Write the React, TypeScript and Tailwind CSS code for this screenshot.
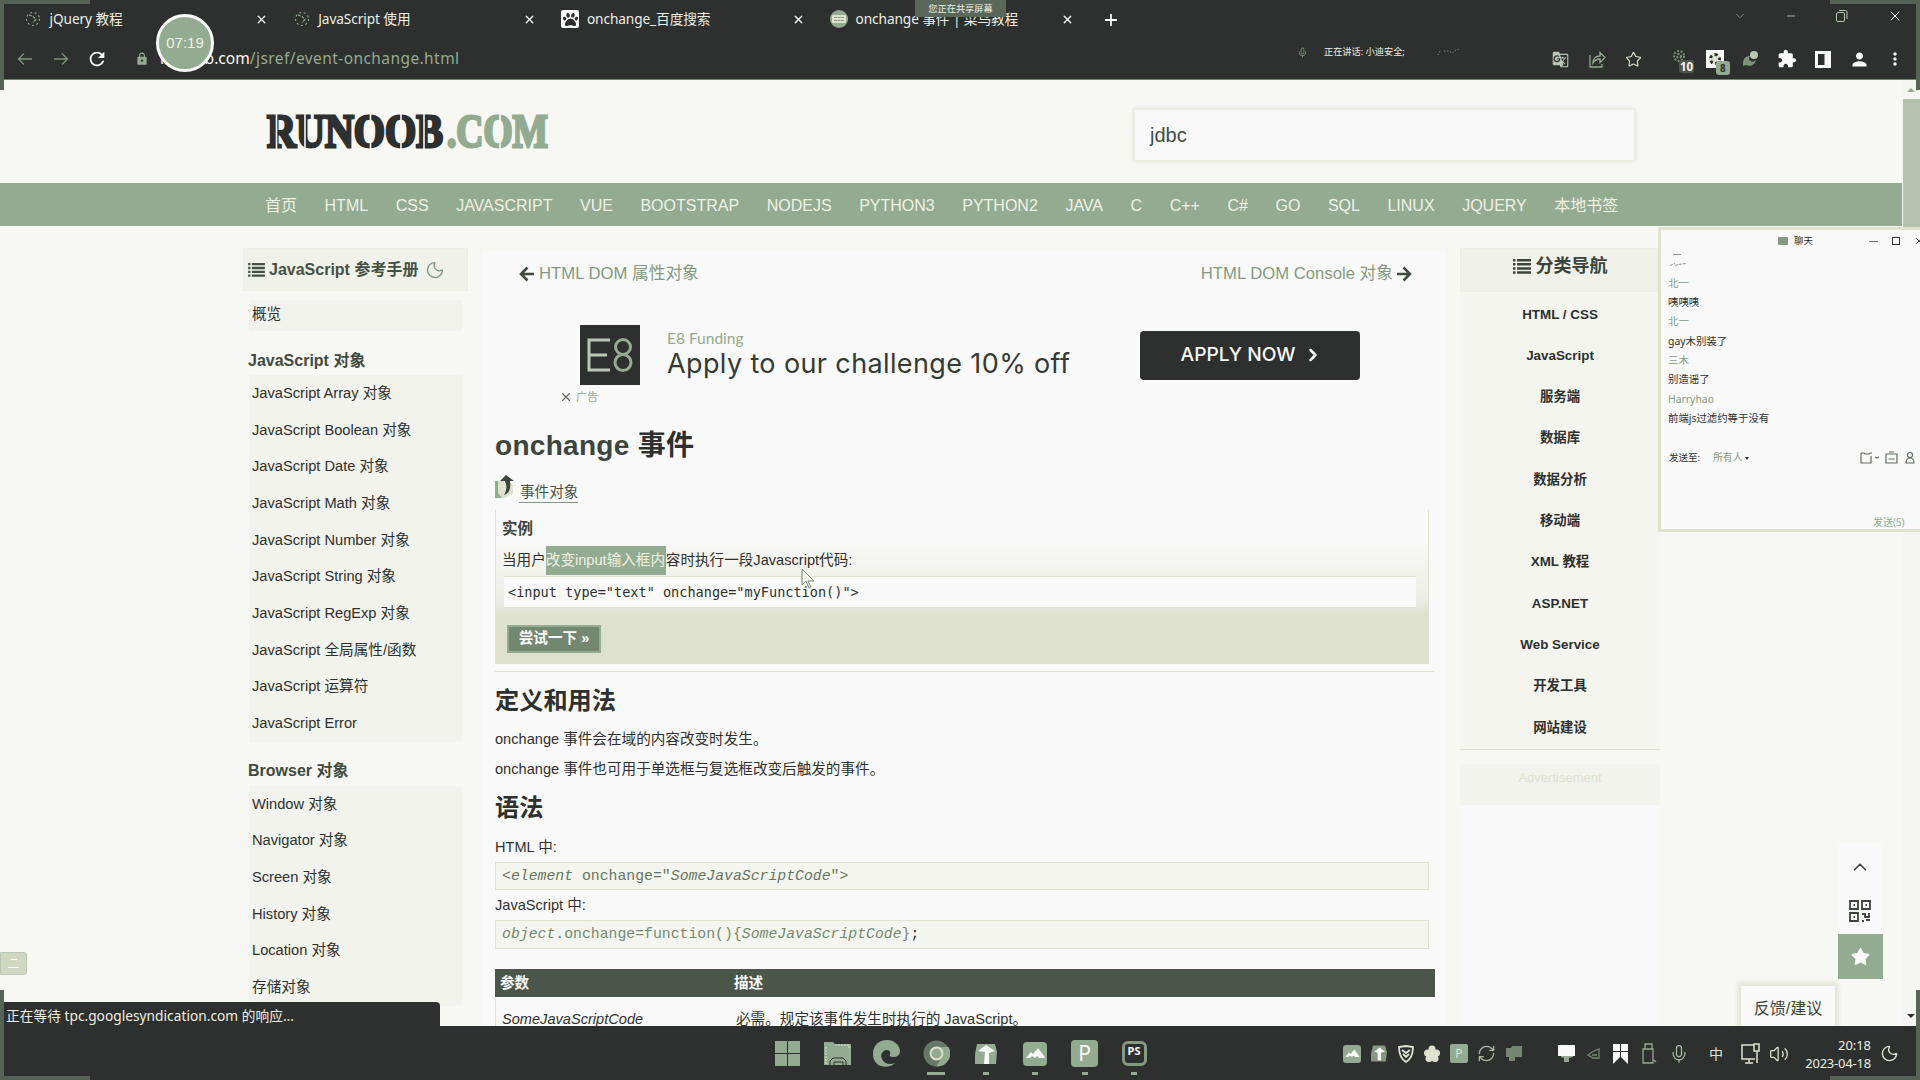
import type { ReactNode } from "react";
import { FaPaw, FaStar } from "react-icons/fa";
import { ChevronDown, ChevronRight, ChevronUp, Mic, Minus, Moon, Plus, Star, Volume2, X, RefreshCw } from "lucide-react";
import { MdLock, MdMoreVert, MdPerson, MdRefresh, MdExtension, MdGTranslate } from "react-icons/md";

const ARIAL = "font-['Liberation_Sans','Noto_Sans_CJK_SC',sans-serif]";
const SEGOE = "font-['Noto_Sans','Noto_Sans_CJK_SC',sans-serif]";

const tabs = [
  { title: "jQuery 教程", kind: "loading" },
  { title: "JavaScript 使用", kind: "loading" },
  { title: "onchange_百度搜索", kind: "baidu" },
  { title: "onchange 事件 | 菜鸟教程", kind: "runoob" },
];

const nav = [
  "首页", "HTML", "CSS", "JAVASCRIPT", "VUE", "BOOTSTRAP", "NODEJS", "PYTHON3", "PYTHON2",
  "JAVA", "C", "C++", "C#", "GO", "SQL", "LINUX", "JQUERY", "本地书签",
];

const jsItems = [
  "JavaScript Array 对象", "JavaScript Boolean 对象", "JavaScript Date 对象", "JavaScript Math 对象",
  "JavaScript Number 对象", "JavaScript String 对象", "JavaScript RegExp 对象",
  "JavaScript 全局属性/函数", "JavaScript 运算符", "JavaScript Error",
];
const browserItems = ["Window 对象", "Navigator 对象", "Screen 对象", "History 对象", "Location 对象", "存储对象"];
const categories = [
  "HTML / CSS", "JavaScript", "服务端", "数据库", "数据分析", "移动端",
  "XML 教程", "ASP.NET", "Web Service", "开发工具", "网站建设",
];
const chat = [
  { t: "北一", who: true }, { t: "咦咦咦", who: false }, { t: "北一", who: true }, { t: "gay木别装了", who: false },
  { t: "三木", who: true }, { t: "别造谣了", who: false }, { t: "Harryhao", who: true }, { t: "前端js过滤约等于没有", who: false },
];

function TabIcon({ kind }: { kind: string }) {
  if (kind === "loading")
    return (
      <svg width="18" height="18" viewBox="0 0 18 18" fill="none" stroke="#93ab90" strokeWidth="1.1">
        <circle cx="9" cy="9" r="6.5" strokeDasharray="2 2.5" />
        <path d="M5 5l4 1.5 3 3-3 3" strokeDasharray="3 1" />
      </svg>
    );
  if (kind === "baidu")
    return (
      <span className="flex h-[18px] w-[18px] items-center justify-center rounded-[2px] bg-[#f9f9f9]">
        <FaPaw size={15} color="#2e302f" />
      </span>
    );
  return (
    <span className="flex h-[18px] w-[18px] items-center justify-center rounded-full bg-[#93ab90]">
      <span className="flex h-[8px] w-[14px] flex-col justify-center gap-[2px] rounded-[1px] bg-[#dfe2cf] px-[2px]">
        <i className="border-t border-dashed border-[#84997f]" />
        <i className="border-t border-dashed border-[#84997f]" />
      </span>
    </span>
  );
}

function ListIcon({ size }: { size: number }) {
  return (
    <svg width={size} height={size - 3} viewBox="0 0 18 15" fill="currentColor">
      <path d="M0 0h2.500v2.500H0zM4 0h14v2.500H4zM0 4.100h2.500v2.500H0zM4 4.100h14v2.500H4zM0 8.200h2.500v2.500H0zM4 8.200h14v2.500H4zM0 12.300h2.500v2.500H0zM4 12.300h14v2.500H4z" />
    </svg>
  );
}

function ArrowIcon({ flip }: { flip?: boolean }) {
  return (
    <svg width="15" height="16" viewBox="0 0 15 16" fill="none" stroke="#414a41" strokeWidth="2.600" className={flip ? "rotate-180" : ""}>
      <path d="M15 8H3M8.500 1.500L2 8l6.500 6.500" />
    </svg>
  );
}

function Browser() {
  return (
    <div className={`h-20 shrink-0 border-b border-[#74856f] bg-[#2e302f] text-[#f9f9f9] ${SEGOE}`}>
      <div className="flex h-[39px] items-center">
        {tabs.map((t, i) => (
          <div key={i} className="flex w-[268.7px] items-center pl-[24px] pr-[1px]">
            <TabIcon kind={t.kind} />
            <span className="ml-[7.5px] flex-1 whitespace-nowrap text-[13.7px] tracking-[-0.1px] text-[#eceee3]">{t.title}</span>
            <X size={13} strokeWidth={2.5} />
          </div>
        ))}
        <Plus size={18} strokeWidth={2.4} className="ml-[27px]" />
        <div className="ml-auto mr-[17px] flex items-center gap-[38px] pb-[7px] text-[#b9c8b4]">
          <ChevronDown size={14} strokeWidth={1} />
          <Minus size={12} strokeWidth={1.8} />
          <svg width="14" height="14" viewBox="0 0 14 14" fill="none" stroke="currentColor">
            <rect x="1.5" y="3.5" width="8" height="9" rx="1.5" />
            <path d="M4 1.5h6.5a1.5 1.5 0 0 1 1.5 1.5v7" />
          </svg>
          <X size={16} strokeWidth={1.5} color="#f9f9f9" />
        </div>
      </div>
      <div className="flex h-[40px] items-center">
        <svg className="ml-[17px]" width="16" height="14" viewBox="0 0 16 14" fill="none" stroke="#7d927b" strokeWidth="1.3">
          <path d="M15 7H2M7 1.5L1.5 7 7 12.500" />
        </svg>
        <svg className="ml-[20px]" width="16" height="14" viewBox="0 0 16 14" fill="none" stroke="#7d927b" strokeWidth="1.3">
          <path d="M1 7h13M9 1.500L14.500 7 9 12.500" />
        </svg>
        <MdRefresh size={22} className="ml-[17px]" />
        <MdLock size={14} color="#93ab90" className="ml-[27px]" />
        <span className="ml-[11px] text-[15.6px]">runoob.com</span>
        <span className="text-[15.5px] tracking-[0.42px] text-[#93ab90]">/jsref/event-onchange.html</span>
        <div className="ml-auto mr-[17px] flex items-center">
          <MdGTranslate size={17} color="#b9c8b4" />
          <svg width="17" height="18" viewBox="0 0 17 18" fill="none" stroke="#93ab90" strokeWidth="1.300" className="ml-[20px]">
            <path d="M1 5v12h12v-3M4 13c0-5 3-7 7-7V2.500L16 7.500l-5 5V9c-3 0-5 1-7 4z" />
          </svg>
          <Star size={17} strokeWidth={1.6} color="#dfe2cf" className="ml-[19px]" />
          <span className="relative ml-[30px] h-[20px] w-[22px]">
            <svg width="16" height="16" viewBox="0 0 16 16" fill="none" stroke="#7d927b" strokeWidth="2" strokeDasharray="2 1.500">
              <circle cx="7" cy="7" r="5" />
              <circle cx="7" cy="7" r="2" />
            </svg>
            <span className="absolute left-[7px] top-[11px] rounded-[3px] bg-[#4c564c] px-[1px] text-[11.5px] font-bold leading-[13px]">10</span>
          </span>
          <span className="relative ml-[12px] flex h-[18px] w-[18px] items-center justify-center bg-[#f9f9f9]">
            <span className="h-[12px] w-[12px] rounded-full border-[3px] border-dotted border-[#2e302f] bg-[#dfe2cf]" />
            <span className="absolute left-[10px] top-[11px] rounded-[3px] bg-[#93ab90] px-[4px] text-[10px] font-bold leading-[14px] text-[#2e302f]">8</span>
          </span>
          <svg className="ml-[18px]" width="17" height="18" viewBox="0 0 17 18">
            <path d="M1 14C1 8 4 6 8 6c-2 3-1 5 3 6l3-2c-1 5-6 7-10 5l-3 1z" fill="#7d927b" />
            <circle cx="12" cy="5" r="4" fill="#b9c8b4" />
          </svg>
          <MdExtension size={20} className="ml-[18px]" />
          <svg className="ml-[18px]" width="16" height="17" viewBox="0 0 16 17">
            <path d="M0 0h16v17H0zM3 3v11h6.500V3z" fill="#f9f9f9" fillRule="evenodd" />
          </svg>
          <MdPerson size={21} className="ml-[18px]" />
          <MdMoreVert size={20} className="ml-[15px] mr-[-2px]" />
        </div>
      </div>
    </div>
  );
}

function Header() {
  return (
    <div className="flex h-[103px] shrink-0 items-start bg-[#f7f7f4]">
      <svg className="ml-[264px] mt-[22px]" width="290" height="60" viewBox="0 -10 290 60" fontFamily="'Liberation Serif', serif" fontWeight="bold">
        <text x="3" y="35" fontSize="46" textLength="176" lengthAdjust="spacingAndGlyphs" fill="#2e302f" stroke="#2e302f" strokeWidth="2.800">RUNOOB</text>
        <text x="183" y="35" fontSize="46" textLength="101" lengthAdjust="spacingAndGlyphs" fill="#93ab90" stroke="#93ab90" strokeWidth="2.800">.COM</text>
        <path d="M106.500 1v38M137 1v38M236 1v38M12.500 1v38M160 1v38M41 1v38" stroke="#f7f7f4" strokeWidth="1.600" />
      </svg>
      <div className={`ml-[579px] mt-[28px] flex h-[54px] w-[503px] items-center border-2 border-[#eceee2] bg-[#f9f9f9] pl-[15px] text-[20px] text-[#454c45] shadow-[0_0_3px_#e4e7d8] ${ARIAL}`}>
        jdbc
      </div>
    </div>
  );
}

function NavBar() {
  return (
    <div className={`flex h-[43px] w-[1902px] shrink-0 items-center gap-[27.55px] bg-[#93ab90] pl-[265px] pt-[3px] text-[16px] text-[#eff1e6] ${ARIAL}`}>
      {nav.map((n) => (
        <span key={n} className="whitespace-nowrap">{n}</span>
      ))}
    </div>
  );
}

function SideGroup({ title, items }: { title: string; items: string[] }) {
  return (
    <>
      <div className="flex h-[44px] shrink-0 items-center pl-[5px] pt-[15px] text-[16px] font-bold text-[#414a41]">{title}</div>
      <div className="ml-[6px] w-[213px] shrink-0 bg-[#f2f3ec]">
        {items.map((t) => (
          <div key={t} className="flex h-[36.7px] items-center whitespace-nowrap pl-[3px] pt-[1px] text-[14.65px]">{t}</div>
        ))}
      </div>
    </>
  );
}

function LeftColumn() {
  return (
    <div className="flex w-[225px] shrink-0 flex-col pt-[22px] text-[#2e302f]">
      <div className="flex h-[43px] shrink-0 items-center border border-[#eceee2] bg-[#f0f2e9] pl-[4px] pt-[1px] text-[16px] font-bold text-[#465146]">
        <ListIcon size={17} />
        <span className="ml-[4px] whitespace-nowrap">JavaScript 参考手册</span>
        <Moon size={20} strokeWidth={1.500} color="#7d927b" className="ml-[7px]" />
      </div>
      <div className="ml-[6px] mt-[9px] flex h-[31px] w-[213px] shrink-0 items-center bg-[#f2f3ec] pb-[1px] pl-[3px] text-[14.6px]">概览</div>
      <SideGroup title="JavaScript 对象" items={jsItems} />
      <SideGroup title="Browser 对象" items={browserItems} />
    </div>
  );
}

function Ad() {
  return (
    <div className="h-[113px] pt-[28px] font-['Lato','Noto_Sans_CJK_SC',sans-serif]">
      <div className="flex h-[60px] pl-[85px]">
        <div className="flex h-[60px] w-[60px] items-center justify-center bg-[#2e302f]">
          <svg width="50" height="34" viewBox="0 0 50 34" fill="none" strokeWidth="3">
            <path d="M25 2H4v30h21M4 17h18" stroke="#b9c8b4" />
            <circle cx="38" cy="9" r="7.500" stroke="#93ab90" />
            <circle cx="38" cy="24.500" r="8" stroke="#93ab90" />
          </svg>
        </div>
        <div className="ml-[27px] w-[473px]">
          <div className="mt-[4px] h-[18px] text-[15.5px] leading-[18px] text-[#93ab90]">E8 Funding</div>
          <div className="whitespace-nowrap font-['Inter',sans-serif] text-[27px] leading-[34px] tracking-[0.38px] text-[#343a34]">Apply to our challenge 10% off</div>
        </div>
        <div className="mt-[6px] flex h-[49px] w-[220px] items-center justify-center rounded-[4px] bg-[#2e302f] pb-[2px] font-['Inter',sans-serif] text-[19.2px] font-medium text-[#f9f9f9]">
          <span>APPLY NOW</span>
          <ChevronRight size={20} strokeWidth={3} className="ml-[8px] mr-[-4px]" />
        </div>
      </div>
      <div className="flex h-[24px] items-center pl-[64px] text-[11px] text-[#93ab90]">
        <X size={14} strokeWidth={2} color="#5f6e5f" />
        <span className="ml-[3px]">广告</span>
      </div>
    </div>
  );
}

function Main() {
  return (
    <div className="ml-[14px] mt-[24px] flex h-[776px] w-[964px] shrink-0 flex-col overflow-hidden bg-[#f9f9f9] pl-[13px] text-[14.6px] text-[#2e302f]">
      <div className="flex h-[47px] shrink-0 items-center pl-[24px] pr-[34px] pt-[1px] text-[16.7px] text-[#84997f]">
        <ArrowIcon />
        <span className="ml-[5px]">HTML DOM 属性对象</span>
        <span className="ml-auto mr-[4px]">HTML DOM Console 对象</span>
        <ArrowIcon flip />
      </div>
      <Ad />
      <h1 className="flex h-[71px] shrink-0 items-center pt-[3px] text-[28px] font-bold tracking-[0.3px] text-[#3c443c]">
        onchange&nbsp;<span className="text-[#2e302f]">事件</span>
      </h1>
      <div className="flex h-[30px] shrink-0 items-start">
        <svg className="-mt-[6px]" width="20" height="26" viewBox="0 0 20 26">
          <path d="M0 7h12l6 3v10l-8 4H0z" fill="#dfe2cf" />
          <path d="M0 7h3v12l4 5H0z" fill="#93ab90" />
          <path d="M11 1l8 6h-4c1 6 0 12-6 14 3-5 3-9 1-14H5z" fill="#3c443c" />
        </svg>
        <span className="ml-[4px] mt-[3px] border-b border-[#84997f] pl-px leading-[19px] text-[#465146]">事件对象</span>
      </div>
      <div className="h-[154px] w-[934px] shrink-0 border-x border-b border-[#dfe2cf] bg-[linear-gradient(#f9f9f9_0,#f9f9f9_28px,#eceee2_90px,#dde1cd_105px,#dde1cd_154px)] pl-[6px]">
        <div className="flex h-[36px] items-center pt-[2px] text-[15.5px] font-bold text-[#3c443c]">实例</div>
        <div className="flex h-[29px] items-center whitespace-nowrap">
          <span>当用户</span>
          <span className="flex h-[29px] w-[120px] items-center bg-[#93ab90] text-[#eff1e6]">改变input输入框内</span>
          <span>容时执行一段Javascript代码:</span>
        </div>
        <div className="ml-[2px] mt-[1px] flex h-[32px] w-[912px] items-center border-y border-[#dfe2cf] bg-[#f9f9f9] pl-[4px] font-['DejaVu_Sans_Mono',monospace] text-[13.55px] text-[#2e302f]">
          {'<input type="text" onchange="myFunction()">'}
        </div>
        <div className="ml-[5px] mt-[17px] flex h-[28px] w-[94px] items-center justify-center border-2 border-[#93ab90] bg-[#748871] text-[14.6px] font-bold text-[#f9f9f9]">
          尝试一下 »
        </div>
      </div>
      <div className="mt-[7px] h-px w-[939px] shrink-0 bg-[#dfe2cf]" />
      <h2 className="flex h-[51px] shrink-0 items-center pt-[8px] text-[24.200px] font-bold">定义和用法</h2>
      <p className="flex h-[30px] shrink-0 items-center pt-[3px]">onchange 事件会在域的内容改变时发生。</p>
      <p className="flex h-[30px] shrink-0 items-center pt-[3px]">onchange 事件也可用于单选框与复选框改变后触发的事件。</p>
      <h2 className="flex h-[48px] shrink-0 items-center pt-[3px] text-[24.200px] font-bold">语法</h2>
      <p className="flex h-[30px] shrink-0 items-center pt-[3px]">HTML 中:</p>
      <div className="mt-[1px] flex h-[28px] w-[934px] shrink-0 items-center border border-[#dfe2cf] bg-[#f4f5ee] pl-[6px] font-['Liberation_Mono',monospace] text-[14.8px] text-[#657563]">
        &lt;<i>element</i>&nbsp;onchange="<i>SomeJavaScriptCode</i>"&gt;
      </div>
      <p className="flex h-[30px] shrink-0 items-center pt-[2px]">JavaScript 中:</p>
      <div className="flex h-[29px] w-[934px] shrink-0 items-center border border-[#dfe2cf] bg-[#f4f5ee] pl-[6px] font-['Liberation_Mono',monospace] text-[14.8px] text-[#748871]">
        <i>object</i>.onchange=function(){"{"}<i>SomeJavaScriptCode</i>{"}"}<span className="text-[#2e302f]">;</span>
      </div>
      <div className="mt-[20px] grid h-[28px] w-[940px] shrink-0 grid-cols-[234px_1fr] items-center bg-[#4b564b] pl-[5px] pt-[2px] font-bold text-[#f9f9f9]">
        <span>参数</span>
        <span>描述</span>
      </div>
      <div className="grid h-[42px] w-[940px] shrink-0 grid-cols-[234px_1fr] items-center border-l border-[#dfe2cf] pl-[6px] pt-[3px]">
        <i>SomeJavaScriptCode</i>
        <span>必需。规定该事件发生时执行的 JavaScript。</span>
      </div>
    </div>
  );
}

function RightColumn() {
  return (
    <div className="ml-[14px] flex w-[200px] shrink-0 flex-col pt-[22px]">
      <div className="flex h-[44px] shrink-0 items-center justify-center border border-[#eceee2] bg-[#f0f2e9] pb-[7px] text-[18px] font-bold text-[#3c443c]">
        <ListIcon size={18} />
        <span className="ml-[5px]">分类导航</span>
      </div>
      <div className="h-[458px] shrink-0 border-b border-[#dfe2cf] bg-[#f4f5ef] pt-[2px]">
        {categories.map((c) => (
          <div key={c} className="flex h-[41.3px] items-center justify-center text-[13.4px] font-bold text-[#2e302f]">{c}</div>
        ))}
      </div>
      <div className="mt-[14px] flex h-[41px] shrink-0 items-start justify-center bg-[#f2f3ec] pt-[4px] text-[13px] text-[#dfe2cf]">Advertisement</div>
      <div className="flex-1 bg-[#f9f9f9]" />
    </div>
  );
}

function ChatWindow() {
  return (
    <div className={`absolute left-[1658px] top-[227px] h-[305px] w-[262px] overflow-hidden border-y-[3px] border-l-[3px] border-[#dfe2cf] bg-[#f9f9f9] text-[10.4px] text-[#2e302f] ${SEGOE}`}>
      <div className="flex h-[22px] items-center pl-[117px]">
        <span className="h-[8px] w-[10px] rounded-[1px] bg-[#84997f]" />
        <span className="ml-[6px] text-[9.5px]">聊天</span>
        <span className="ml-[56px] h-px w-[9px] bg-[#5f6e5f]" />
        <span className="ml-[14px] h-[8px] w-[8px] border border-[#2e302f]" />
        <X size={10} strokeWidth={2} className="-mr-2 ml-[14px] shrink-0" />
      </div>
      <svg className="ml-[7px] mt-[1px]" width="20" height="14" viewBox="0 0 20 14" fill="none" stroke="#84997f">
        <path d="M5 1.500h8" />
        <path d="M2 12.500l5-2M7 12.500l3-1 8-1" strokeDasharray="3 1" />
      </svg>
      <div className="pl-[7px] pt-[7px]">
        {chat.map((c, i) => (
          <div key={i} className={`flex h-[19.3px] items-center whitespace-nowrap ${c.who ? "text-[#84997f]" : "text-[#2e302f]"}`}>{c.t}</div>
        ))}
      </div>
      <div className="mt-[20px] flex h-[20px] items-center pl-[8px]">
        <span className="text-[9.5px]">发送至:</span>
        <span className="ml-[13px] text-[9.8px] text-[#84997f]">所有人</span>
        <span className="ml-[3px] border-x-[2px] border-t-[3px] border-x-transparent border-t-[#2e302f]" />
        <svg className="ml-auto shrink-0" width="60" height="14" viewBox="0 0 60 14" fill="none" stroke="#5f6e5f" strokeWidth="1.200">
          <path d="M1 2h3l1 1h4l1-1h2M1 2v10h10V5M15 6l2 1 2-1" />
          <path d="M26 3h11v9H26zM29 1h5M28.500 8h6" />
          <circle cx="50" cy="4" r="2.500" />
          <path d="M46 12c0-3 1.500-5 4-5s4 2 4 5z" />
        </svg>
      </div>
      <div className="mt-[44px] flex h-[20px] items-center pl-[212px] text-[10px] text-[#93ab90]">发送(S)</div>
    </div>
  );
}

function FloatingTools() {
  return (
    <div className="absolute left-[1837px] top-[842px] flex w-[46px] flex-col items-center bg-[#f9f9f9]">
      <div className="flex h-[50px] items-center"><ChevronUp size={22} strokeWidth={1.800} color="#3c443c" /></div>
      <svg className="mt-[8px]" width="22" height="22" viewBox="0 0 22 22" fill="none" stroke="#3c443c" strokeWidth="1.800">
        <path d="M1 1h8v8H1zM13 1h8v8h-8zM1 13h8v8H1z" />
        <path d="M4.500 5h1.500M16.500 5H18M4.500 17H6M13 14h3v3h4v-4M13 21h2M17 20h4" />
      </svg>
      <div className="mt-[12px] flex h-[45px] w-[45px] items-center justify-center bg-[#93ab90]">
        <FaStar size={19} color="#f9f9f9" />
      </div>
    </div>
  );
}

function Tile({ children, mark }: { children: ReactNode; mark: string }) {
  return (
    <div className="relative flex h-[27px] w-[27px] items-center justify-center">
      {children}
      <span className={`absolute top-[32px] h-[3px] bg-[#93ab90] ${mark}`} />
    </div>
  );
}

function SwallowGlyph() {
  return <path d="M3 16l5-6 2 2 5-6 6 8 1 2h-6l-2-2-2 2-3-2-2 2z" fill="#f9f9f9" />;
}

function Taskbar() {
  return (
    <div className={`relative flex h-[54px] shrink-0 items-center bg-[#2e302f] pt-[1px] ${SEGOE}`}>
      <div className="flex items-center gap-[22.500px] pl-[774px]">
        <Tile mark="w-0">
          <div className="grid grid-cols-2 gap-[1px]">
            <i className="h-3 w-3 bg-[#93ab90]" /><i className="h-3 w-3 bg-[#93ab90]" />
            <i className="h-3 w-3 bg-[#93ab90]" /><i className="h-3 w-3 bg-[#93ab90]" />
          </div>
        </Tile>
        <Tile mark="w-0">
          <svg width="27" height="25" viewBox="0 0 27 25">
            <path d="M0 1h9l2 2h16v21H0z" fill="#93ab90" />
            <path d="M2 23V6M11 4h14v3" stroke="#dfe2cf" strokeDasharray="2 1" fill="none" />
            <path d="M6 24v-4l3-3h10l3 3v4M10 24v-3h9v3" stroke="#2e302f" fill="none" />
          </svg>
        </Tile>
        <Tile mark="w-0">
          <svg width="27" height="27" viewBox="0 0 27 27">
            <path d="M0 14C0 5 6 0 14 0c8 0 13 6 13 11 0 4-3 6-7 6-3 0-4-1-3-3 1-3-1-4-4-4-4 1-6 5-4 9 2 5 8 6 13 4-5 6-22 6-22-9z" fill="#93ab90" />
          </svg>
        </Tile>
        <Tile mark="w-[18px]">
          <svg width="27" height="27" viewBox="0 0 27 27">
            <circle cx="13.500" cy="13.500" r="13" fill="#677966" />
            <path d="M13.500 7h12a13 13 0 0 1-12 19.500l5-9z" fill="#93ab90" />
            <circle cx="13.500" cy="13.500" r="6" fill="#93ab90" stroke="#dfe2cf" strokeWidth="1.800" />
          </svg>
        </Tile>
        <Tile mark="w-[6px]">
          <svg width="24" height="24" viewBox="0 0 24 24">
            <path d="M3 2h18l2 8-1 12H1V12z" fill="#93ab90" />
            <path d="M4 9l8-6 9 6-6 2v11h-5l1-12z" fill="#f9f9f9" />
          </svg>
        </Tile>
        <Tile mark="w-[6px]">
          <svg width="24" height="24" viewBox="0 0 24 24"><rect width="24" height="24" rx="4" fill="#93ab90" /><SwallowGlyph /></svg>
        </Tile>
        <Tile mark="w-[6px]">
          <div className="flex h-[27px] w-[27px] items-center justify-center rounded-[4px] bg-[#93ab90] text-[21px] leading-none text-[#f9f9f9]">P</div>
        </Tile>
        <Tile mark="w-[6px]">
          <div className="flex h-[25px] w-[25px] items-start justify-center rounded-[6px] border-[3px] border-[#84997f] bg-[#2e302f] text-[11px] font-bold leading-[13px] text-[#f9f9f9]">PS</div>
        </Tile>
      </div>
      <div className="ml-auto mr-[21px] flex items-center">
        <svg width="18" height="18" viewBox="0 0 24 24"><rect width="24" height="24" rx="4" fill="#93ab90" /><SwallowGlyph /></svg>
        <svg className="ml-[10px]" width="16" height="17" viewBox="0 0 24 24">
          <path d="M3 0h18l3 10-2 14H0V12z" fill="#84997f" />
          <path d="M5 9l8-6 8 6-6 2v11h-5V11z" fill="#f9f9f9" />
        </svg>
        <svg className="ml-[11px]" width="16" height="18" viewBox="0 0 16 18" fill="none" stroke="#dfe2cf" strokeWidth="1.800">
          <path d="M1 2l7-1 7 1c0 8-2 12-7 15C3 14 1 10 1 2zM4 5l4 3 4-3M5 9l3 3 3-3" />
        </svg>
        <svg className="ml-[10px]" width="16" height="18" viewBox="0 0 16 18" fill="#dfe2cf">
          <circle cx="8" cy="4" r="3.500" /><circle cx="3.500" cy="8" r="3.500" /><circle cx="12.500" cy="8" r="3.500" /><circle cx="5" cy="13.500" r="3.500" /><circle cx="11" cy="13.500" r="3.500" /><circle cx="8" cy="9" r="4" />
        </svg>
        <span className="ml-[10px] flex h-[19px] w-[18px] items-center justify-center rounded-[2px] bg-[#93ab90] text-[12px] text-[#dfe2cf]">P</span>
        <RefreshCw size={19} strokeWidth={1.600} color="#a9baa5" className="ml-[9px]" />
        <svg className="ml-[9px]" width="18" height="17" viewBox="0 0 18 17"><path d="M1 3h5l1-2h10v11h-7v4H4v-4H1z" fill="#748871" /></svg>
        <svg className="ml-[35px]" width="17" height="17" viewBox="0 0 17 17">
          <path d="M0 0h17v11H0z" fill="#f9f9f9" /><path d="M3 11h12v1l-4 1v4H6v-4l-3-1z" fill="#93ab90" />
        </svg>
        <svg className="ml-[12px]" width="14" height="11" viewBox="0 0 14 11" fill="none" stroke="#748871" strokeWidth="1.300"><path d="M1 7l4-3 7-3v9H6zM5 7h5" /></svg>
        <svg className="ml-[12px]" width="15" height="20" viewBox="0 0 15 20"><path d="M0 0h7v7H0zM8 0h7v7H8zM0 8h7v5l-7 7zM8 8h7v12l-7-7z" fill="#f9f9f9" /></svg>
        <svg className="ml-[14px]" width="15" height="21" viewBox="0 0 15 21" fill="none" stroke="#93ab90" strokeWidth="1.300"><path d="M3 1h7v5H3zM1 6h10v14H1zM12 17l2 2" /></svg>
        <Mic size={20} strokeWidth={1.500} color="#a9baa5" className="ml-[12px]" />
        <span className="ml-[20px] text-[14px] text-[#dfe2cf]">中</span>
        <svg className="ml-[18px]" width="20" height="21" viewBox="0 0 20 21" fill="none" stroke="#dfe2cf" strokeWidth="1.500"><path d="M13 2H1v14h13M4 20h8M8 16v4M13 1h5v7h-5zM16 8v12" /></svg>
        <Volume2 size={20} strokeWidth={1.500} color="#dfe2cf" className="ml-[8px]" />
        <div className="ml-[14px] w-[68px] text-right text-[12.900px] leading-[18px] text-[#eceee3]">
          <div>20:18</div>
          <div className="whitespace-nowrap tracking-[-0.15px]">2023-04-18</div>
        </div>
        <Moon size={19} strokeWidth={1.700} color="#dfe2cf" className="ml-[9px]" />
      </div>
    </div>
  );
}

function CaptureCorners() {
  return (
    <>
      <i className="absolute left-0 top-0 h-[90px] w-[90px] bg-[#566357] [clip-path:polygon(0_0,100%_0,100%_4px,4px_4px,4px_100%,0_100%)]" />
      <i className="absolute right-0 top-0 h-[90px] w-[90px] bg-[#566357] [clip-path:polygon(0_0,100%_0,100%_100%,86px_100%,86px_4px,0_4px)]" />
      <i className="absolute bottom-0 left-0 h-[90px] w-[90px] bg-[#566357] [clip-path:polygon(0_0,4px_0,4px_86px,100%_86px,100%_100%,0_100%)]" />
      <i className="absolute bottom-0 right-0 h-[90px] w-[90px] bg-[#566357] [clip-path:polygon(86px_0,100%_0,100%_100%,0_100%,0_86px,86px_86px)]" />
    </>
  );
}

export default function App() {
  return (
    <div className="relative flex h-[1080px] w-[1920px] flex-col overflow-hidden bg-[#f7f7f4]">
      <Browser />
      <Header />
      <NavBar />
      <div className={`flex h-[800px] shrink-0 overflow-hidden pl-[243px] ${ARIAL}`}>
        <LeftColumn />
        <Main />
        <RightColumn />
      </div>
      <Taskbar />

      {/* page scrollbar */}
      <div className="absolute right-0 top-[81px] flex h-[945px] w-[18px] flex-col items-center justify-between bg-[#f5f6f1]">
        <span className="mt-[7px] border-x-4 border-b-4 border-x-transparent border-b-[#93ab90]" />
        <span className="mb-[8px] border-x-4 border-t-4 border-x-transparent border-t-[#2e302f]" />
      </div>
      <div className="absolute right-0 top-[99px] h-[130px] w-[17px] bg-[#b5c3ae]" />

      <ChatWindow />
      <FloatingTools />
      <div className={`absolute left-[1741px] top-[986px] flex h-[40px] w-[94px] items-center justify-center bg-[#f9f9f9] pt-[6px] text-[16px] text-[#3c443c] shadow-[0_0_5px_3px_#dfe2cf] [clip-path:inset(-10px_-10px_0_-10px)] ${ARIAL}`}>
        反馈/建议
      </div>
      <div className="absolute left-0 top-[952px] flex h-[23px] w-[27px] flex-col items-center justify-center gap-[7px] rounded-r-[3px] border border-[#b9c8b4] bg-[#d0d8c2]">
        <i className="h-px w-[6px] bg-[#f9f9f9]" />
        <i className="h-px w-[11px] bg-[#f9f9f9]" />
      </div>
      <div className={`absolute left-0 top-[1002px] h-[24px] w-[440px] rounded-tr-[4px] bg-[#2e302f] pl-[6px] text-[13.700px] leading-[27px] tracking-[0.03px] text-[#eceee3] ${SEGOE}`}>
        正在等待 tpc.googlesyndication.com 的响应...
      </div>

      {/* meeting overlays */}
      <div className={`absolute left-[915px] top-0 flex h-[17px] w-[91px] items-center justify-center whitespace-nowrap bg-[#5a685a] text-[9.200px] text-[#eceee3] ${SEGOE}`}>
        您正在共享屏幕
      </div>
      <div className={`absolute left-[1297px] top-[43px] flex h-[18px] items-center whitespace-nowrap text-[9.200px] text-[#eceee3] ${SEGOE}`}>
        <Mic size={11} strokeWidth={1.500} color="#93ab90" />
        <span className="ml-[16px]">正在讲话: 小迪安全;</span>
        <svg className="ml-[32px]" width="24" height="8" viewBox="0 0 24 8" fill="none" stroke="#748871" strokeDasharray="1.500 1.500"><path d="M1 7l2-4M7 3h5l3 2 4-3 4-1" /></svg>
      </div>
      <div className={`absolute left-[156px] top-[14px] flex h-[58px] w-[58px] items-center justify-center rounded-full border-[3px] border-[#f9f9f9] bg-[#93ab90] text-[15px] text-[#eff1e6] ${ARIAL}`}>
        07:19
      </div>
      <CaptureCorners />

      {/* mouse pointer */}
      <svg className="absolute left-[801px] top-[568px]" width="15" height="22" viewBox="0 0 15 22">
        <path d="M1 1v16l4-4 3 7 2-1-3-6h6z" fill="#f4f5ee" stroke="#748871" />
      </svg>
    </div>
  );
}
